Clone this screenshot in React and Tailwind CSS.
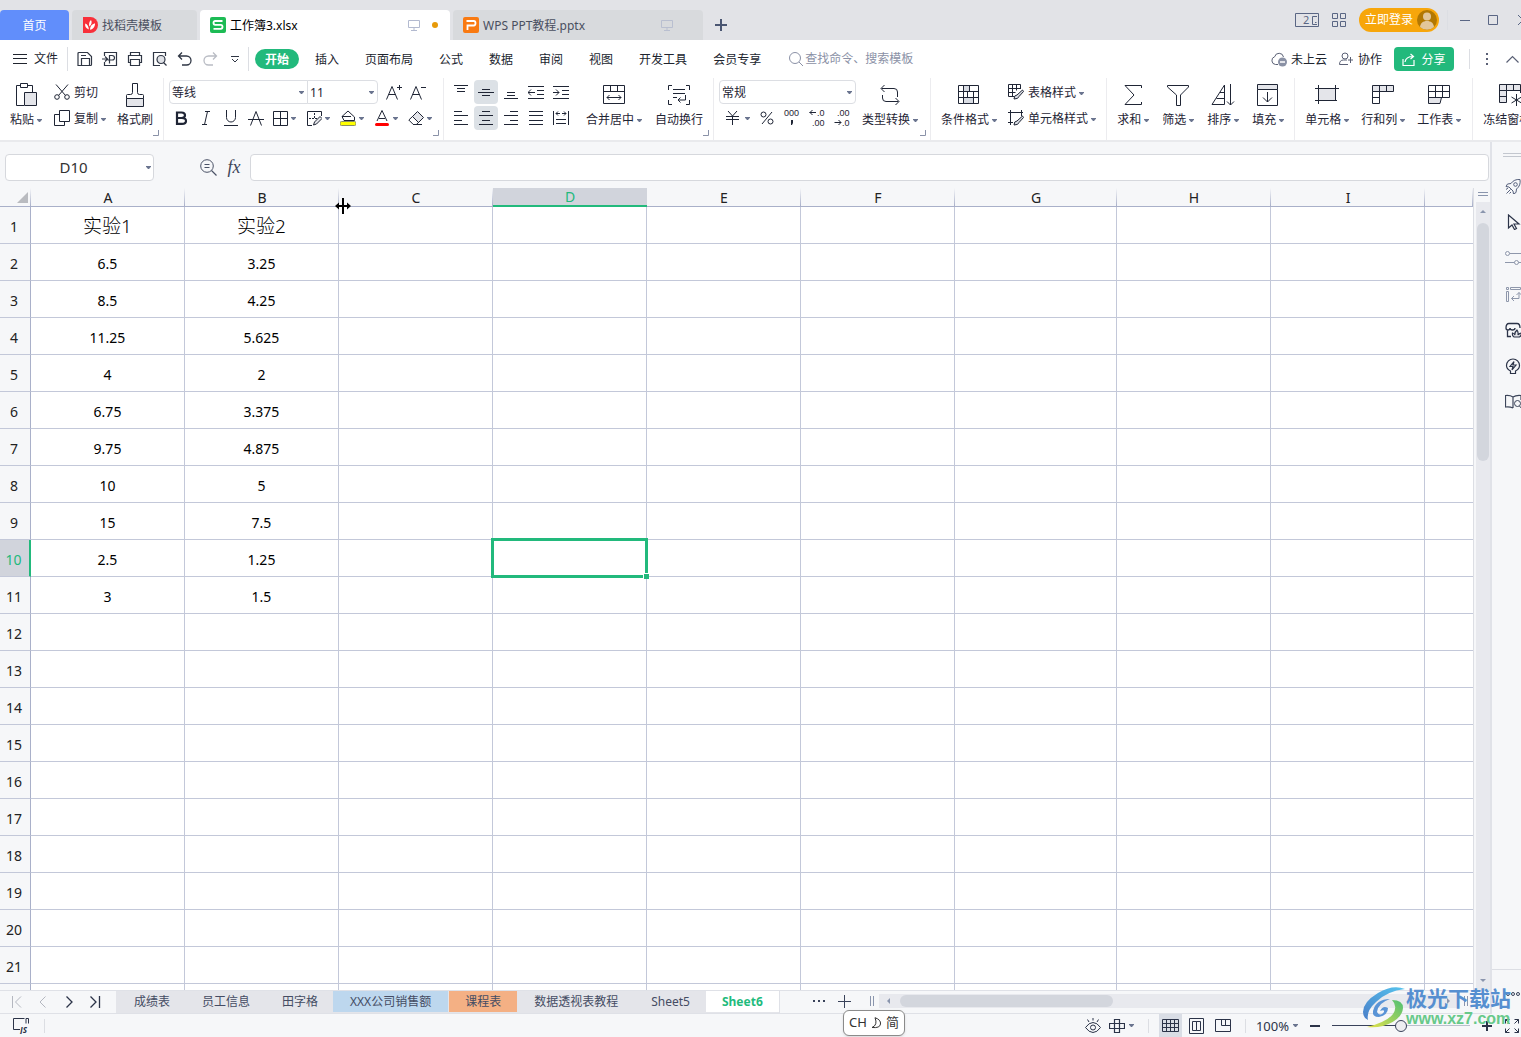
import React, { useState } from "react";

const COLUMNS = ["A", "B", "C", "D", "E", "F", "G", "H", "I", "J"];
const ROW_COUNT = 21;

const CELLS = [
  ["实验1", "实验2"],
  ["6.5", "3.25"],
  ["8.5", "4.25"],
  ["11.25", "5.625"],
  ["4", "2"],
  ["6.75", "3.375"],
  ["9.75", "4.875"],
  ["10", "5"],
  ["15", "7.5"],
  ["2.5", "1.25"],
  ["3", "1.5"],
];

const MENUS = ["插入", "页面布局", "公式", "数据", "审阅", "视图", "开发工具", "会员专享"];

const SHEETS = [
  { name: "成绩表", style: "px-4 bg-[#e4e5ea] text-[#454c63] h-full" },
  { name: "员工信息", style: "px-4 bg-[#e4e5ea] text-[#454c63] h-full" },
  { name: "田字格", style: "pl-4 pr-[15px] bg-[#e4e5ea] text-[#454c63] h-full" },
  { name: "XXX公司销售额", style: "px-[17px] bg-[#bdd7ee] text-[#454c63] h-[21px] mr-px" },
  { name: "课程表", style: "px-4 bg-[#f4b084] text-[#454c63] h-[21px]" },
  { name: "数据透视表教程", style: "px-[17px] bg-[#e4e5ea] text-[#454c63] h-full" },
  { name: "Sheet5", style: "px-4 bg-[#e4e5ea] text-[#454c63] h-full" },
  { name: "Sheet6", style: "px-4 bg-white text-[#1fbb7d] font-bold h-[21px]" },
];

const Icon = ({ w = 16, h = 16, className = "", children }) => (
  <svg
    width={w}
    height={h}
    viewBox={`0 0 ${w} ${h}`}
    fill="none"
    stroke="currentColor"
    className={`shrink-0 ${className}`}
    aria-hidden="true"
  >
    {children}
  </svg>
);

const Caret = ({ className = "" }) => (
  <svg width="5" height="3" viewBox="0 0 5 3" className={`shrink-0 fill-[#6a748f] ${className}`} aria-hidden="true">
    <path d="M0 0h5v.8L3 3H2L0 .8z" />
  </svg>
);

const Divider = ({ className = "" }) => <span className={`w-px shrink-0 bg-[#dcdee3] ${className}`} />;

const Group = ({ className, launcher, children }) => (
  <div className={`relative flex shrink-0 border-r border-[#ececef] pt-0.5 ${className}`}>
    {children}
    {launcher && (
      <Icon w={6} h={6} className="absolute right-1 bottom-1 text-[#8a92a8]">
        <path d="M5.500 0v5.500H0" />
      </Icon>
    )}
  </div>
);

const BigButton = ({ label, caret = true, children }) => (
  <button type="button" className="flex shrink-0 flex-col items-center gap-1 pt-0.5">
    <span className="flex h-[26px] items-center">{children}</span>
    <span className="flex items-center gap-[3px] text-xs leading-4 whitespace-nowrap">
      {label}
      {caret && <Caret />}
    </span>
  </button>
);

const RowButton = ({ label, caret, children }) => (
  <button type="button" className="flex h-6 items-center gap-1 text-xs whitespace-nowrap">
    {children}
    <span className="flex items-center gap-[3px] pt-0.5">
      {label}
      {caret && <Caret />}
    </span>
  </button>
);

const Tool = ({ label, active, children }) => (
  <button
    type="button"
    aria-label={label}
    className={`flex h-6 w-6 items-center justify-center rounded-sm ${active ? "bg-[#dce1e6]" : ""}`}
  >
    {children}
  </button>
);

const DropTool = ({ label, children }) => (
  <button type="button" aria-label={label} className="flex h-6 w-[34px] items-center gap-[3px] pl-1">
    {children}
    <Caret />
  </button>
);

const Lines = ({ rows }) => (
  <Icon>
    {rows.map(([x1, x2, y]) => (
      <path key={y} d={`M${x1} ${y}.5H${x2}`} />
    ))}
  </Icon>
);

const Monitor = ({ className }) => (
  <Icon w={12} h={12} className={className}>
    <path d="M.5 1.500h11v7H.5zM6 8.500v3M3 11.500h6" />
  </Icon>
);

function TitleBar() {
  return (
    <header className="flex h-10 shrink-0 items-end gap-[3px] overflow-hidden bg-[#e2e3e7] text-xs">
      <button type="button" className="h-[30px] w-[69px] shrink-0 rounded-t bg-[#618efb] pt-0.5 text-white">
        首页
      </button>
      <button
        type="button"
        className="flex h-[30px] w-[125px] shrink-0 items-center gap-1 rounded-t bg-[#d8dadd] pl-[11px] text-[#4a4f60]"
      >
        <svg width="15" height="16" viewBox="0 0 15 16" aria-hidden="true">
          <path d="M0 0h7.500a7.500 8 0 0 1 0 16H0z" fill="#f8303a" />
          <path d="M5.800 12.500C2.500 11 1.800 9 2.200 6.500c2.200.8 3.600 3 3.600 6zM6.400 9.500c-.8-2.500-.2-5 1.600-6.500 1.200 2 .8 4.800-1.600 6.500zM7 12.800c0-3.500 1.600-5.800 5-6.600.2 3.200-1.600 6-5 6.600z" fill="#fff" />
        </svg>
        <span className="pt-0.5">找稻壳模板</span>
      </button>
      <button
        type="button"
        className="flex h-[30px] w-[250px] shrink-0 items-center gap-1 rounded-t bg-white pr-3 pl-2.5 text-black"
      >
        <svg width="16" height="16" viewBox="0 0 16 16" aria-hidden="true">
          <rect width="16" height="16" rx="2" fill="#1dbb55" />
          <path d="M12.500 4H5.200C4 4 3.500 4.800 3.500 5.800S4 7.800 5.200 7.800h5.600c1.200 0 1.700.8 1.700 2s-.5 2-1.700 2H3.500" fill="none" stroke="#fff" strokeWidth="1.800" />
        </svg>
        <span className="flex-1 pt-0.5 text-left">工作簿3.xlsx</span>
        <Monitor className="text-[#b3bad0]" />
        <span className="ml-2 h-1.5 w-1.5 rounded-full bg-[#e79a09]" />
      </button>
      <button
        type="button"
        className="flex h-[30px] w-[250px] shrink-0 items-center gap-1 rounded-t bg-[#d8dadd] pr-[30px] pl-2.5 text-[#4a4f60]"
      >
        <svg width="16" height="16" viewBox="0 0 16 16" aria-hidden="true">
          <rect width="16" height="16" rx="2" fill="#f97a12" />
          <path d="M4.500 13V8.500h6.300c1.200 0 1.700-.8 1.700-2.200S12 4 10.800 4H3.500" fill="none" stroke="#fff" strokeWidth="1.800" />
        </svg>
        <span className="flex-1 pt-0.5 text-left">WPS PPT教程.pptx</span>
        <Monitor className="text-[#b9bfd0]" />
      </button>
      <button type="button" aria-label="新建标签" className="flex h-[30px] w-[30px] shrink-0 items-center justify-center text-[#4a5672]">
        <Icon w={12} h={12}>
          <path d="M6 0v12M0 6h12" strokeWidth="2" />
        </Icon>
      </button>

      <div className="-mr-2 ml-auto flex h-full shrink-0 items-center text-[#5a6684]">
        <Icon w={24} h={14}>
          <path d="M.5.5h23v13H.5zM22 3.500h-4.500v8H22M20 9.500h1.500" />
          <text x="8" y="11" fontSize="11" fill="currentColor" stroke="none">2</text>
        </Icon>
        <Icon w={14} h={14} className="ml-[13px]">
          <path d="M.5.5h5v5h-5zM8.500.5h5v5h-5zM.5 8.500h5v5h-5zM8.500 8.500h5v5h-5z" />
        </Icon>
        <button type="button" className="ml-[13px] flex h-6 w-20 items-center justify-between rounded-full bg-[#f7a60b] pr-0.5 pl-1.5 text-white">
          立即登录
          <svg width="20" height="20" viewBox="0 0 20 20" aria-hidden="true">
            <circle cx="10" cy="10" r="10" fill="#b27803" />
            <circle cx="10" cy="6.500" r="4" fill="#e2c69a" />
            <path d="M3 17c.5-4 3-6 7-6s6.500 2 7 6a10 10 0 0 1-14 0z" fill="#e2c69a" />
          </svg>
        </button>
        <Divider className="ml-2 h-5 bg-[#c9ccd4]" />
        <button type="button" aria-label="最小化" className="ml-3">
          <Icon w={10} h={10}><path d="M0 5.500h10" /></Icon>
        </button>
        <button type="button" aria-label="最大化" className="ml-[18px]">
          <Icon w={10} h={10}><path d="M.5.5h9v9h-9z" /></Icon>
        </button>
        <button type="button" aria-label="关闭" className="ml-[19px]">
          <Icon w={12} h={12}><path d="M1 1l10 10M11 1L1 11" /></Icon>
        </button>
      </div>
    </header>
  );
}

function MenuBar() {
  return (
    <nav className="flex h-[38px] shrink-0 items-center overflow-hidden bg-white text-xs whitespace-nowrap">
      <button type="button" className="ml-[13px] flex shrink-0 items-center gap-[7px]">
        <Icon w={14} h={10}><path d="M0 .5h14M0 4.500h14M0 9.500h14" /></Icon>
        文件
      </button>
      <Divider className="ml-[9px] h-6" />
      <div className="ml-[9px] flex shrink-0 items-center gap-[9px] text-[#2f3644]">
        <button type="button" aria-label="保存">
          <Icon>
            <path d="M1 14.500V2.500q0-1 1-1h8.500l4 4v8q0 1-1 1zM4.500 14.500v-7h8v7M4 4.500h5" strokeWidth="1.200" />
          </Icon>
        </button>
        <button type="button" aria-label="输出为PDF">
          <Icon>
            <path d="M2.500 5V1.500h12v13h-12V11M0 8h5M3 5.500L5.500 8 3 10.500M7.500 12.500V4.500h2.500q2.500 0 2.500 2.300T10 9H5.500" strokeWidth="1.200" />
          </Icon>
        </button>
        <button type="button" aria-label="打印">
          <Icon>
            <path d="M3.500 4.500v-3h9v3M3.500 11.500h-2v-7h13v7h-2M3.500 8.500h9v6h-9z" strokeWidth="1.200" />
          </Icon>
        </button>
        <button type="button" aria-label="打印预览">
          <Icon>
            <path d="M8 14.500H1.500v-13h12V5" strokeWidth="1.200" />
            <circle cx="9" cy="8.500" r="4" fill="#dfe1e6" strokeWidth="1.200" />
            <path d="M11.500 11.500l3 3" strokeWidth="1.200" />
          </Icon>
        </button>
        <button type="button" aria-label="撤销">
          <Icon><path d="M5 1.500L1.500 5 5 8.500M2 5h7.500a4.500 4.500 0 0 1 0 9H5" strokeWidth="1.300" /></Icon>
        </button>
        <button type="button" aria-label="恢复" className="text-[#b9bcc4]">
          <Icon><path d="M11 1.500L14.500 5 11 8.500M14 5H6.500a4.500 4.500 0 0 0 0 9H11" strokeWidth="1.300" /></Icon>
        </button>
        <button type="button" aria-label="更多">
          <Icon w={16} h={8}><path d="M4 1.500h8M5 4l3 3 3-3" /></Icon>
        </button>
      </div>
      <Divider className="ml-[5px] h-6" />
      <button type="button" className="ml-1.5 h-5 w-11 shrink-0 rounded-full bg-[#22b97c] pt-px font-bold text-white">开始</button>
      <div className="ml-4 flex shrink-0 gap-[26px] pt-0.5 text-[#20242e]">
        {MENUS.map((name) => (
          <button key={name} type="button">{name}</button>
        ))}
      </div>
      <label className="ml-7 flex w-40 shrink-0 items-center gap-0.5 text-[#8b91a6]">
        <Icon w={14} h={14}>
          <circle cx="6" cy="6" r="5.500" />
          <path d="M10 10l4 4" />
        </Icon>
        <input
          aria-label="查找命令"
          placeholder="查找命令、搜索模板"
          className="min-w-0 flex-1 outline-none placeholder:text-[#8b91a6]"
        />
      </label>

      <div className="ml-auto flex shrink-0 items-center">
        <button type="button" className="flex items-center gap-1">
          <Icon className="text-[#5a6075]">
            <path d="M7 13.500H4.500a4 4 0 0 1-.8-7.800A4.500 4.500 0 0 1 12.500 6" />
            <circle cx="11.500" cy="11" r="4.500" fill="#8a91a5" stroke="none" />
            <path d="M9 11h5" stroke="#fff" strokeWidth="1.500" />
          </Icon>
          <span className="pt-0.5">未上云</span>
        </button>
        <button type="button" className="ml-3 flex items-center gap-[5px]">
          <Icon w={14} h={14} className="text-[#5a6075]">
            <circle cx="6" cy="4" r="3" />
            <path d="M9 12.500H.5q0-4.500 4-4.500M4.500 8H8M11.500 5v6M9 8h5" />
          </Icon>
          <span className="pt-0.5">协作</span>
        </button>
        <button type="button" className="ml-3 flex h-6 w-[60px] items-center justify-center gap-1.5 rounded bg-[#22b97c] text-white">
          <Icon w={13} h={13}>
            <path d="M1 6v6.500h11V7M3 9q1-5.500 8-5.500M8.500 1l3 2.500-3 2.500" strokeWidth="1.200" />
          </Icon>
          <span className="pt-0.5">分享</span>
        </button>
        <Divider className="ml-[15px] h-5" />
        <button type="button" aria-label="更多选项" className="ml-4 text-[#5a6075]">
          <Icon w={2} h={14}><path d="M1 1v2M1 6v2M1 11v2" strokeWidth="2" /></Icon>
        </button>
        <button type="button" aria-label="收起功能区" className="mr-0.5 ml-[18px] text-[#5a6075]">
          <Icon w={13} h={8}><path d="M.5 7.500l6-6 6 6" strokeWidth="1.200" /></Icon>
        </button>
      </div>
    </nav>
  );
}

const Select = ({ label, value, className }) => (
  <span className={`relative flex h-6 items-center border border-[#dcdee3] bg-white ${className}`}>
    <select aria-label={label} className="w-full appearance-none pt-px pl-0.5 text-xs outline-none">
      <option>{value}</option>
    </select>
    <Caret className="pointer-events-none absolute right-[3px]" />
  </span>
);

const DigitIcon = ({ children }) => (
  <svg
    width="20"
    height="20"
    viewBox="0 0 20 20"
    fill="currentColor"
    className="shrink-0 font-['Liberation_Sans',sans-serif] text-[9px]"
    aria-hidden="true"
  >
    {children}
  </svg>
);

function Ribbon() {
  return (
    <section
      aria-label="开始"
      className="relative z-10 flex h-16 shrink-0 overflow-hidden border-b-2 border-[#e9eaed] bg-white text-[#1f2535]"
    >
      <Group className="px-2.5" launcher>
        <BigButton label="粘贴">
          <Icon w={22} h={24}>
            <path d="M5 2.500H1.500v20H9M13 2.500h4.500V9M5.500.5h7v4h-7z" />
            <path d="M9.500 9.500h12v13h-12z" fill="#e4e5ea" />
          </Icon>
        </BigButton>
        <div className="ml-3 flex flex-col gap-0.5">
          <RowButton label="剪切">
            <Icon>
              <path d="M2 .5l9.500 11M14 .5L4.500 11.500" />
              <circle cx="3" cy="13" r="2.300" />
              <circle cx="13" cy="13" r="2.300" />
            </Icon>
          </RowButton>
          <RowButton label="复制" caret>
            <Icon>
              <path d="M5 4.500H.5v11h10V12M5.500.5h10v11h-10z" />
            </Icon>
          </RowButton>
        </div>
        <div className="ml-[11px] flex">
          <BigButton label="格式刷" caret={false}>
            <Icon w={18} h={24}>
              <path d="M.5 15.500h17v8H.5z" fill="#e4e5ea" />
              <path d="M.5 15.500v-3q0-1 1-1h3q2 0 2-2v-9h5v9q0 2 2 2h3q1 0 1 1v3" />
            </Icon>
          </BigButton>
        </div>
      </Group>

      <Group className="w-[280px] flex-col gap-0.5 pl-[5px]" launcher>
        <div className="flex items-center">
          <Select label="字体" value="等线" className="w-[139px] rounded-l-sm" />
          <Select label="字号" value="11" className="-ml-px w-[71px] rounded-r-sm" />
          <button type="button" aria-label="增大字号" className="ml-2">
            <Icon>
              <path d="M.5 15.500L6 2.500l5.500 13M2.500 10.500h7M11 3.500h5M13.500 1v5" />
            </Icon>
          </button>
          <button type="button" aria-label="减小字号" className="ml-2">
            <Icon>
              <path d="M.5 15.500L6 2.500l5.500 13M2.500 10.500h7M11 3.500h5" />
            </Icon>
          </button>
        </div>
        <div className="flex">
          <div className="flex gap-px">
            <Tool label="加粗">
              <Icon><path d="M4 2.500h4.500q3.500 0 3.500 2.700T8.500 8H4zM4 8h5q4 0 4 2.900t-4 2.900H4z" strokeWidth="2.200" /></Icon>
            </Tool>
            <Tool label="倾斜">
              <Icon><path d="M7 1.500h5M4 14.500h5M9.500 1.500l-3 13" /></Icon>
            </Tool>
            <Tool label="下划线">
              <Icon><path d="M3.500 0v7.500a4.500 4.500 0 0 0 9 0V0M1 15.500h14" /></Icon>
            </Tool>
            <Tool label="删除线">
              <Icon><path d="M2.500 15.500L8 1.500l5.500 14M0 9.500h16" /></Icon>
            </Tool>
          </div>
          <DropTool label="边框">
            <Icon><path d="M1.500 1.500h14v14h-14zM8.500 1.500v14M1.500 8.500h14" /></Icon>
          </DropTool>
          <DropTool label="绘图边框">
            <Icon>
              <path d="M15.500 6V1.500h-14v14H6" />
              <path d="M3 8.500h8M8.500 3v6" strokeDasharray="2 1" />
              <path d="M7.500 15l1-3 5.500-5.500 2 2-5.500 5.500z" fill="#e4e5ea" />
            </Icon>
          </DropTool>
          <DropTool label="填充颜色">
            <Icon>
              <path d="M2 6.500L8 1l6.500 6v3.500H4zM2 6.500h9" />
              <rect x="0" y="11.500" width="16" height="4" rx="1.500" fill="#ffff00" stroke="#8a8f62" />
            </Icon>
          </DropTool>
          <DropTool label="字体颜色">
            <Icon>
              <path d="M3 11L8 .5 13 11M5 8.500h6" />
              <rect x="1" y="13" width="14" height="3" rx="1.500" fill="#ff0000" stroke="none" />
            </Icon>
          </DropTool>
          <DropTool label="清除">
            <Icon>
              <path d="M4.500 6.500L9.500 1.500l6 6-5 5z" fill="#e4e5ea" />
              <path d="M4.500 6.500L.8 10l4.500 4.500h3l2.200-2zM5 14.500h9" />
            </Icon>
          </DropTool>
        </div>
      </Group>

      <Group className="pr-2.5 pl-[5px]" launcher>
        <div className="flex flex-col gap-0.5">
          <div className="flex gap-px">
            <Tool label="顶端对齐"><Lines rows={[[1, 15, 1], [4, 12, 4], [4, 12, 7]]} /></Tool>
            <Tool label="垂直居中" active><Lines rows={[[4, 12, 5], [0, 16, 8], [4, 12, 11]]} /></Tool>
            <Tool label="底端对齐"><Lines rows={[[4, 12, 8], [4, 12, 11], [1, 15, 14]]} /></Tool>
            <Tool label="减少缩进">
              <Icon><path d="M0 2.500h16M9 6.500h7M9 10.500h7M0 14.500h16M0 8.500h7M3 5.500l-3 3 3 3" /></Icon>
            </Tool>
            <Tool label="增加缩进">
              <Icon><path d="M0 2.500h16M9 6.500h7M9 10.500h7M0 14.500h16M0 8.500h6M3 5.500l3 3-3 3" /></Icon>
            </Tool>
          </div>
          <div className="flex gap-px">
            <Tool label="左对齐"><Lines rows={[[1, 9, 1], [1, 15, 5], [1, 9, 10], [1, 15, 14]]} /></Tool>
            <Tool label="水平居中" active><Lines rows={[[4, 12, 1], [1, 15, 5], [4, 12, 10], [1, 15, 14]]} /></Tool>
            <Tool label="右对齐"><Lines rows={[[7, 15, 1], [1, 15, 5], [7, 15, 10], [1, 15, 14]]} /></Tool>
            <Tool label="两端对齐"><Lines rows={[[1, 15, 1], [1, 15, 5], [1, 15, 10], [1, 15, 14]]} /></Tool>
            <Tool label="分散对齐">
              <Icon><path d="M.5 1v14M15.500 1v14M3 3.500h4M9 3.500h4M5 1.500l-2 2 2 2M11 1.500l2 2-2 2M3 9.500h10M3 13.500h10" /></Icon>
            </Tool>
          </div>
        </div>
        <div className="ml-[13px] flex gap-[13px]">
          <BigButton label="合并居中">
            <Icon w={22} h={20}>
              <path d="M.5.5h21v18H.5zM.5 6.500h21M7.500.5v6M14.500.5v6M4 12.500h14M6.500 10L4 12.500 6.500 15M15.500 10l2.500 2.500-2.500 2.500" />
            </Icon>
          </BigButton>
          <BigButton label="自动换行" caret={false}>
            <Icon w={22} h={20}>
              <path d="M4 .5H.5V5M18 .5h3.500V5M4 19.500H.5V15M18 19.500h3.500V15M5 4.500h12M5 8.500h12M5 12.500h4M17.500 10v5H10M12.500 12.500l-2.500 2.500 2.500 2.500" />
            </Icon>
          </BigButton>
        </div>
      </Group>

      <Group className="pr-3 pl-[5px]" launcher>
        <div className="flex flex-col gap-0.5">
          <Select label="数字格式" value="常规" className="w-[137px] rounded-sm" />
          <div className="flex gap-px">
            <button type="button" aria-label="货币格式" className="flex h-6 w-[35px] items-center gap-1 pl-1.5">
              <Icon><path d="M3 1l4.500 5L12 1M1 6.500h13M1 9.500h13M7.500 6v9" /></Icon>
              <Caret />
            </button>
            <Tool label="百分比">
              <Icon>
                <circle cx="4.500" cy="4.500" r="2.500" />
                <circle cx="11.500" cy="11.500" r="2.500" />
                <path d="M13 2L3 14" />
              </Icon>
            </Tool>
            <Tool label="千位分隔">
              <DigitIcon>
                <text x="2" y="8">000</text>
                <path d="M9 12h2v3l-1 2H9z" />
              </DigitIcon>
            </Tool>
            <Tool label="增加小数位">
              <DigitIcon>
                <path d="M2.500 4.500H9M5.500 2L3 4.500 5.500 7" fill="none" stroke="currentColor" />
                <text x="10" y="8">.0</text>
                <text x="5" y="18">.00</text>
              </DigitIcon>
            </Tool>
            <Tool label="减少小数位">
              <DigitIcon>
                <text x="5" y="8">.00</text>
                <path d="M2.500 14.500H9M6.500 12L9 14.500 6.500 17" fill="none" stroke="currentColor" />
                <text x="10" y="18">.0</text>
              </DigitIcon>
            </Tool>
          </div>
        </div>
        <div className="ml-1.5 flex">
          <BigButton label="类型转换">
            <Icon w={20} h={22}>
              <path d="M4.500 1L1 4.500 4.500 8M1.500 4.500H14q3.500 0 3.500 3.500v5M15.500 14l3.500 3.500-3.500 3.500M18.500 17.500H6q-3.500 0-3.500-3.500v-3" />
            </Icon>
          </BigButton>
        </div>
      </Group>

      <Group className="pr-2.5 pl-2.5">
        <BigButton label="条件格式">
          <Icon w={22} h={20}>
            <path d="M5.500.5h6v6h-6zM5.500 12.500h10v6h-10z" fill="#d9dce3" />
            <path d="M.5.5h20v18H.5zM.5 6.500h20M.5 12.500h20M5.500.5v18M11.500.5v6M9.500 6.500v6M15.500 6.500v12" />
          </Icon>
        </BigButton>
        <div className="ml-[11px] flex flex-col gap-0.5">
          <RowButton label="表格样式" caret>
            <Icon>
              <path d="M6 12.500H.5V.5h12V5M.5 4.500h12M.5 8.500h7M4.500.5v12M8.500.5v6" />
              <path d="M6 15q0-4 3-4l5.500-5 1 1.500-4.500 5q-.5 2.500-5 2.500z" fill="#d9dce3" />
            </Icon>
          </RowButton>
          <RowButton label="单元格样式" caret>
            <Icon>
              <path d="M0 2.500h15M2.500 0v15M13.500 0v6M0 12.500h5" />
              <path d="M6 15q0-4 3-4l5.500-5 1 1.500-4.500 5q-.5 2.500-5 2.500z" fill="#d9dce3" />
            </Icon>
          </RowButton>
        </div>
      </Group>

      <Group className="gap-[13px] pr-2.5 pl-2.5">
        <BigButton label="求和">
          <Icon w={18} h={22}><path d="M17.500 4V1.500H1L10 11 1 20.500h16.500V18" /></Icon>
        </BigButton>
        <BigButton label="筛选">
          <Icon w={22} h={22}><path d="M.5 1.500h21v1.500L13.500 11v10.500h-4V11L.5 3z" /></Icon>
        </BigButton>
        <BigButton label="排序">
          <Icon w={24} h={22}>
            <path d="M1 20.500L13.500 1v19.500zM9 8.500h4.500M5.500 14.500h8M19.500 0v21M16 17.500l3.500 3.500 3.500-3.500" />
          </Icon>
        </BigButton>
        <BigButton label="填充">
          <Icon w={22} h={22}>
            <path d="M.5.5h20v5H.5z" fill="#e4e5ea" />
            <path d="M.5 5.500v16h20v-16M10.500 8v10M6 13.500l4.500 4.500 4.500-4.500" />
          </Icon>
        </BigButton>
      </Group>

      <Group className="gap-3 pr-[11px] pl-2.5">
        <BigButton label="单元格">
          <Icon w={24} h={20}>
            <path d="M3.500 3.500h17v12h-17z" fill="#e4e5ea" />
            <path d="M0 3.500h24M3.500 0v19M20.500 0v13M0 15.500h18M20 15.500h2" />
          </Icon>
        </BigButton>
        <BigButton label="行和列">
          <Icon w={22} h={20}>
            <path d="M.5.5h21v6H.5z" fill="#e4e5ea" />
            <path d="M7.500.5v18h-7V6.500M14.500.5v6M.5 12.500h7" />
          </Icon>
        </BigButton>
        <BigButton label="工作表">
          <Icon w={22} h={20}>
            <path d="M.5 12.500h13l-1.500 6H.5z" fill="#e4e5ea" />
            <path d="M.5.500h21v12H.5zM.5 6.500h21M7.500.5v12M14.500.5v12" />
          </Icon>
        </BigButton>
      </Group>

      <Group className="border-r-0 pl-2.5">
        <BigButton label="冻结窗格">
          <Icon w={24} h={22}>
            <path d="M.5.5h21v6h-14v12h-7z" fill="#e4e5ea" />
            <path d="M.5 6.500h7M.5 12.500h7M7.500.5v6M14.500.5v6M21.500 6v3M17.500 10v12M12.500 13l10 6M22.500 13l-10 6" />
          </Icon>
        </BigButton>
      </Group>
    </section>
  );
}

function FormulaBar() {
  return (
    <div className="flex h-[46px] shrink-0 items-center pt-1 pr-px pl-[5px]">
      <label className="relative flex h-[27px] w-[149px] shrink-0 items-center rounded-sm border border-[#d6d8dd] bg-white">
        <input aria-label="名称框" defaultValue="D10" className="w-full pr-3 text-center text-[15px] text-[#333] outline-none" />
        <Caret className="absolute right-0.5" />
      </label>
      <button type="button" aria-label="浏览公式结果" className="ml-[46px] text-[#4a5266]">
        <Icon w={17} h={17}>
          <circle cx="7" cy="7" r="6.300" />
          <path d="M4.500 5.500h5M4.500 8.500h5M11.500 11.500l5 5" strokeWidth="1.200" />
        </Icon>
      </button>
      <button
        type="button"
        aria-label="插入函数"
        className="ml-2 w-[18px] font-['Liberation_Serif',serif] text-lg leading-5 text-[#3f465a] italic"
      >
        fx
      </button>
      <input aria-label="编辑栏" className="ml-[7px] h-[27px] min-w-0 flex-1 rounded-sm border border-[#d6d8dd] bg-white px-2 text-sm outline-none" />
    </div>
  );
}

const ResizeCursor = () => (
  <svg width="16" height="16" viewBox="0 0 16 16" className="absolute top-2.5 -left-1 z-10" aria-hidden="true">
    <path d="M7 0h2v7h3V4.500L16 8l-4 3.500V9H9v7H7V9H4v2.500L0 8l4-3.500V7h3z" />
  </svg>
);

function Grid() {
  const [selected, setSelected] = useState({ row: 10, col: "D" });

  return (
    <div className="min-h-0 min-w-0 flex-1 overflow-hidden">
      <table className="w-full table-fixed border-separate border-spacing-0 text-sm leading-5">
        <colgroup>
          <col className="w-[31px]" />
          {COLUMNS.map((col) => (
            <col key={col} className={col === "J" ? "" : col === "G" ? "w-[162px]" : "w-[154px]"} />
          ))}
        </colgroup>
        <thead>
          <tr className="h-[19px]">
            <th className="relative border-b border-[#a9b0c9] bg-[linear-gradient(to_bottom,transparent,#a9b0c9)] bg-[length:1px_100%] bg-right bg-no-repeat p-0">
              <svg width="11" height="11" viewBox="0 0 11 11" className="mr-[3px] ml-auto" aria-hidden="true">
                <path d="M11 0v11H0z" fill="#b9bbc0" />
              </svg>
            </th>
            {COLUMNS.map((col) => {
              const active = col === selected.col;
              return (
                <th
                  key={col}
                  scope="col"
                  className={`relative p-0 leading-4 font-normal ${
                    active
                      ? "border-b-2 border-[#22b97c] bg-[#d1d4dc] pt-px text-[#22b97c]"
                      : "border-b border-[#a9b0c9] bg-[linear-gradient(to_bottom,transparent,#a9b0c9)] bg-[length:1px_100%] bg-right bg-no-repeat pt-0.5 text-[#222]"
                  }`}
                >
                  {col !== "J" && col}
                  {col === "C" && <ResizeCursor />}
                </th>
              );
            })}
          </tr>
        </thead>
        <tbody>
          {Array.from({ length: ROW_COUNT }, (_, i) => i + 1).map((row) => {
            const activeRow = row === selected.row;
            return (
              <tr key={row} className="h-[37px]">
                <th
                  scope="row"
                  className={`border-r border-b p-0 pt-[3px] pr-0.5 font-normal ${
                    activeRow
                      ? "border-r-2 border-r-[#22b97c] border-b-[#c3c8d9] bg-[#d1d4dc] text-[#22b97c]"
                      : "border-r-[#a9b0c9] border-b-[#c3c8d9] text-[#222]"
                  }`}
                >
                  {row}
                </th>
                {COLUMNS.map((col, c) => (
                  <td
                    key={col}
                    onClick={() => setSelected({ row, col })}
                    className={`relative border-b border-[#c3c8d9] bg-white p-0 text-center text-black ${
                      col === "J" ? "" : "border-r"
                    } ${row === 1 ? "pt-0.5 text-[19px] font-light" : "pt-[3px]"}`}
                  >
                    {CELLS[row - 1]?.[c]}
                    {activeRow && col === selected.col && (
                      <span className="absolute -inset-0.5 z-10 border-3 border-[#22b97c]">
                        <span className="absolute -right-1 -bottom-1 h-1.5 w-1.5 border-t border-l border-white bg-[#22b97c]" />
                      </span>
                    )}
                  </td>
                ))}
              </tr>
            );
          })}
          {/* cut-off row under the last full one */}
          <tr className="h-[37px]">
            <td className="border-r border-[#a9b0c9]" />
            {COLUMNS.map((col) => (
              <td key={col} className={`border-[#c3c8d9] bg-white ${col === "J" ? "" : "border-r"}`} />
            ))}
          </tr>
        </tbody>
      </table>
    </div>
  );
}

function VerticalScroll() {
  return (
    <div className="flex w-[17px] shrink-0 flex-col border-l border-[#dcdee4] pl-0.5">
      <Icon w={10} h={14} className="ml-0.5 text-[#8a95ad]">
        <path d="M0 4.500h10M0 7.500h10" />
      </Icon>
      <div className="flex flex-1 flex-col items-center bg-[#e8e9ee] py-2">
        <svg width="6" height="3" viewBox="0 0 6 3" className="fill-[#8a95ad]" aria-hidden="true"><path d="M0 3h6L3 0z" /></svg>
        <div className="mt-2.5 h-[238px] w-3 rounded-full bg-[#d3d6dd]" />
        <svg width="6" height="3" viewBox="0 0 6 3" className="mt-auto fill-[#8a95ad]" aria-hidden="true"><path d="M0 0h6L3 3z" /></svg>
      </div>
    </div>
  );
}

function SheetBar() {
  return (
    <div className="flex h-6 shrink-0 border-y border-[#dfe1e7] text-xs whitespace-nowrap">
      <div className="flex w-[116px] shrink-0 items-center gap-3.5 pb-px pl-[11px] text-[#2b3348]">
        <button type="button" aria-label="第一个工作表" className="text-[#b4b7c0]">
          <Icon w={12} h={12}><path d="M1.500 0v12M10 .5L4.500 6l5.500 5.500" /></Icon>
        </button>
        <button type="button" aria-label="上一个工作表" className="text-[#b4b7c0]">
          <Icon w={12} h={12}><path d="M8.500.5L3 6l5.500 5.500" /></Icon>
        </button>
        <button type="button" aria-label="下一个工作表">
          <Icon w={12} h={12}><path d="M3.500.5L9 6l-5.500 5.500" strokeWidth="1.300" /></Icon>
        </button>
        <button type="button" aria-label="最后一个工作表">
          <Icon w={12} h={12}><path d="M10.500 0v12M1.500.5L7 6l-5.500 5.500" strokeWidth="1.300" /></Icon>
        </button>
      </div>
      <div className="flex shrink-0 bg-[#e4e5ea] pl-0.5">
        {SHEETS.map((sheet) => (
          <button key={sheet.name} type="button" className={sheet.style}>
            {sheet.name}
          </button>
        ))}
      </div>
      <div className="flex min-w-0 flex-1 items-center border-l border-[#dfe1e7] pb-0.5 pl-[33px] text-[#39425a]">
        <button type="button" aria-label="更多工作表" className="flex gap-[3px]">
          <span className="h-0.5 w-0.5 bg-[#39425a]" />
          <span className="h-0.5 w-0.5 bg-[#39425a]" />
          <span className="h-0.5 w-0.5 bg-[#39425a]" />
        </button>
        <button type="button" aria-label="新建工作表" className="ml-[13px]">
          <Icon w={13} h={13}><path d="M6.500 0v13M0 6.500h13" /></Icon>
        </button>
        <Icon w={4} h={10} className="ml-[19px] text-[#8a95ad]"><path d="M.5 0v10M3.500 0v10" /></Icon>
        <div className="ml-[5px] flex h-3.5 flex-1 items-center bg-[#e8e9ee] px-2">
          <svg width="3" height="6" viewBox="0 0 3 6" className="fill-[#8a95ad]" aria-hidden="true"><path d="M3 0v6L0 3z" /></svg>
          <div className="ml-2.5 h-3 w-[213px] rounded-full bg-[#d3d6dd]" />
          <svg width="3" height="6" viewBox="0 0 3 6" className="ml-auto fill-[#8a95ad]" aria-hidden="true"><path d="M0 0v6l3-3z" /></svg>
        </div>
        <Icon w={4} h={10} className="mr-[22px] ml-1.5 text-[#8a95ad]"><path d="M.5 0v10M3.500 0v10" /></Icon>
      </div>
    </div>
  );
}

// each icon is wider than the panel, the right edge is cut by the window
const SIDE_ICONS = [
  {
    name: "快捷工具",
    color: "text-[#56607c]",
    art: (
      <>
        <path d="M15 1.500q-6-.5-9 4L2.500 6 1 8.500l3 .5 4 4 .5 3 2.500-1.500.5-3.500q4.500-3.500 3.500-9.500zM1 11.500L3 10M1.500 15.500l4-4M4.500 15.500l1.500-1.500" />
        <circle cx="10.500" cy="6.500" r="1.800" />
      </>
    ),
  },
  {
    name: "选择",
    color: "text-[#2b3348]",
    art: <path d="M3.500 1v13l3.500-3 2.500 4.500 2-1-2.500-4.500h5z" strokeWidth="1.200" />,
  },
  {
    name: "属性",
    color: "text-[#8e97ab]",
    art: (
      <>
        <circle cx="2.500" cy="3.500" r="2" />
        <circle cx="11.500" cy="12.500" r="2" />
        <path d="M4.500 3.500H18M0 12.500h9.500M13.500 12.500H18" />
      </>
    ),
  },
  {
    name: "分析",
    color: "text-[#8e97ab]",
    art: <path d="M1.500 1.500h2v2h-2zM5.500 1.500h10v2h-10zM1.500 5.500h2v10h-2zM6.500 12.500h7.500v-6M9 10l-2.500 2.500L9 15M11.500 9L14 6.500 16.500 9" />,
  },
  {
    name: "图库",
    color: "text-[#2b3348]",
    art: (
      <>
        <path d="M6 14.500H2.500V8M1 6q0-4.500 3-4.500h8q3 0 3 4.500M1 6q0 2 2 2t2-2q0 2 2.500 2T10 6" strokeWidth="1.300" />
        <path d="M9 15q-2-1-1.500-4 2 .5 2.500 2-.5-3 2-5 1.500 2 1 5 1-1.500 3.500-2 0 3-2 4z" fill="#e4e5ea" strokeWidth="1.200" />
      </>
    ),
  },
  {
    name: "智能",
    color: "text-[#2b3348]",
    art: <path d="M5.500 13q-4-2-4-5.500a6.500 6.500 0 0 1 13 0q0 3.500-4 5.500v2.500h-5zM9 3.500L5 8.500h3l-1 3.500 4-5H8z" strokeWidth="1.200" />,
  },
  {
    name: "帮助",
    color: "text-[#3c455a]",
    art: (
      <>
        <path d="M8 14q-3-1.500-7.500-1V1.500Q5 1 8 3q3-2 8-1.500V6M8 3v11" strokeWidth="1.200" />
        <circle cx="12.500" cy="9.500" r="3" />
        <path d="M14.500 12l2.500 3" />
      </>
    ),
  },
];

function SidePanel() {
  return (
    <aside className="flex w-[31px] shrink-0 flex-col overflow-hidden border-l-2 border-[#e0e2e8] bg-[#f6f7f9] pt-[11px]">
      <span className="ml-[11px] h-1 shrink-0 border-y border-[#c3c7cf]" />
      <div className="mt-[21px] ml-[13px] flex flex-col gap-5">
        {SIDE_ICONS.map((item) => (
          <button key={item.name} type="button" aria-label={item.name} className={item.color}>
            <Icon w={18} h={16}>{item.art}</Icon>
          </button>
        ))}
      </div>
      <div className="mt-auto flex h-[45px] shrink-0 items-center border-t border-[#dcdee4] pl-3.5 text-[#39425a]">
        <button type="button" aria-label="更多面板" className="pt-1">
          <Icon w={16} h={4}>
            <circle cx="2" cy="2" r="1.500" />
            <circle cx="7" cy="2" r="1.500" />
            <circle cx="12" cy="2" r="1.500" />
          </Icon>
        </button>
      </div>
    </aside>
  );
}

function StatusBar() {
  const [zoom, setZoom] = useState(100);

  return (
    <footer className="flex h-[23px] shrink-0 items-center overflow-hidden bg-[#f6f7f9] pr-0.5 pl-[13px] text-[#2b3348]">
      <button type="button" aria-label="宏">
        <Icon w={17} h={16}>
          <path d="M7 11.500H.5v-11h11M13 5.500v-5h2.500v5" />
          <text x="7" y="15" fontSize="8" fontWeight="bold" fontStyle="italic" fill="currentColor" stroke="none">JS</text>
        </Icon>
      </button>
      <Divider className="ml-3.5 h-3.5" />
      <div className="ml-auto flex h-full shrink-0 items-center">
        <button type="button" aria-label="护眼模式">
          <Icon w={16} h={16}>
            <path d="M.5 9.500Q4 4.500 8 4.500t7.500 5Q12 14.500 8 14.500T.5 9.500zM8 0v2.500M2.500 1.500L4 4M13.500 1.500L12 4" />
            <circle cx="8" cy="9.500" r="2.500" />
          </Icon>
        </button>
        <button type="button" aria-label="阅读模式" className="ml-2 flex items-center gap-1">
          <Icon><path d="M5.500 1.500h5v13h-5zM.5 5.500h15v5H.5z" strokeWidth="1.200" /></Icon>
          <Caret />
        </button>
        <Divider className="ml-[14px] h-3.5" />
        <button type="button" aria-label="普通视图" className="ml-2.5 flex h-full w-[23px] items-center justify-center bg-[#d9dde5]">
          <Icon w={17} h={15}><path d="M.5 1.500h16v12H.5zM.5 5.500h16M.5 9.500h16M4.500 1.500v12M8.500 1.500v12M12.500 1.500v12" /></Icon>
        </button>
        <button type="button" aria-label="分页预览" className="ml-[7px]">
          <Icon w={15} h={16}><path d="M.5.5h14v15H.5zM3.500 3.500h4v9h-4zM7.500 3.500h4v9h-4z" /></Icon>
        </button>
        <button type="button" aria-label="页面布局" className="ml-[11px]">
          <Icon w={16} h={15}><path d="M.5 1.500h15v12H.5zM6.500 1.500v6h9M10.500 1.500v6" /></Icon>
        </button>
        <Divider className="ml-[14px] h-3.5" />
        <button type="button" className="ml-2.5 flex items-center gap-1 text-[13px] leading-4">
          {zoom}%
          <Caret />
        </button>
        <button type="button" aria-label="缩小" className="ml-3" onClick={() => setZoom(Math.max(zoom - 10, 10))}>
          <Icon w={10} h={10}><path d="M0 5h10" strokeWidth="2" /></Icon>
        </button>
        <input
          type="range"
          aria-label="缩放比例"
          min="10"
          max="190"
          value={zoom}
          onChange={(e) => setZoom(Number(e.target.value))}
          className="ml-3 h-3 w-[138px] appearance-none bg-[linear-gradient(to_right,#39425a_50%,#b9c0cc_50%)] bg-[length:100%_1px] bg-center bg-no-repeat [&::-webkit-slider-thumb]:h-3 [&::-webkit-slider-thumb]:w-3 [&::-webkit-slider-thumb]:appearance-none [&::-webkit-slider-thumb]:rounded-full [&::-webkit-slider-thumb]:border [&::-webkit-slider-thumb]:border-[#39425a] [&::-webkit-slider-thumb]:bg-[#ededf0]"
        />
        <button type="button" aria-label="放大" className="ml-3" onClick={() => setZoom(Math.min(zoom + 10, 190))}>
          <Icon w={10} h={10}><path d="M0 5h10M5 0v10" strokeWidth="2" /></Icon>
        </button>
        <button type="button" aria-label="全屏显示" className="ml-[13px]">
          <Icon w={14} h={14}>
            <path d="M.5 4.500v-4h4M9.500.5h4v4M.5 9.500v4h4M13.500 9.500v4h-4M.5.5l4 4M13.500.5l-4 4M.5 13.500l4-4M13.500 13.500l-4-4" />
          </Icon>
        </button>
      </div>
    </footer>
  );
}

const InputMethod = () => (
  <div className="absolute bottom-px left-[843px] z-20 flex h-[26px] w-[62px] items-center justify-center gap-1 rounded-md border border-[#8b8b8b] bg-white text-[13px] text-[#333] shadow">
    CH
    <Icon w={11} h={12}>
      <path d="M4 .7q6 2 5.500 6.300T1 10.500Q7 8 4 .7z" />
    </Icon>
    简
  </div>
);

const SiteMark = () => (
  <div className="pointer-events-none absolute right-2.5 bottom-2 z-20 flex items-center">
    <svg width="44" height="42" viewBox="0 0 44 42" aria-hidden="true">
      <defs>
        <linearGradient id="markBlue" x1="1" y1="0" x2="0" y2="1">
          <stop offset="0" stopColor="#56c4ee" />
          <stop offset="1" stopColor="#4a7fc9" />
        </linearGradient>
        <linearGradient id="markGreen" x1="1" y1="0" x2="0" y2="1">
          <stop offset="0" stopColor="#4fbf74" />
          <stop offset="1" stopColor="#e5e24a" />
        </linearGradient>
      </defs>
      <path d="M43 2Q31-3 16 6 1 15 1 25q0 6 5 8-2-9 8-18Q25 4 43 2z" fill="url(#markBlue)" />
      <path d="M28 12q-14 0-17 12-1 6 6 6 9-2 9-9-5-3-8 3 5-2 4 1-4 5-7 0 1-9 13-13z" fill="#5a94d6" />
      <path d="M30 13q11 0 11 8-1 12-20 18-8 2-16 1 20-5 26-13 5-8-1-14z" fill="url(#markGreen)" />
    </svg>
    <div className="flex flex-col whitespace-nowrap">
      <span className="text-[21px] leading-[22px] font-bold text-[#568fd0]">极光下载站</span>
      <span className="font-['Liberation_Sans',sans-serif] text-base leading-5 font-bold text-[#67c98a]">www.xz7.com</span>
    </div>
  </div>
);

const App = () => {
  return (
    <div className="relative flex h-screen flex-col overflow-hidden bg-[#f6f7f9] font-['Noto_Sans','Noto_Sans_CJK_SC',sans-serif] text-[#20242e]">
      <TitleBar />
      <MenuBar />
      <Ribbon />
      <div className="flex min-h-0 flex-1">
        <main className="flex min-w-0 flex-1 flex-col">
          <FormulaBar />
          <div className="flex min-h-0 flex-1">
            <Grid />
            <VerticalScroll />
          </div>
          <SheetBar />
        </main>
        <SidePanel />
      </div>
      <StatusBar />
      <InputMethod />
      <SiteMark />
    </div>
  );
};

export default App;
